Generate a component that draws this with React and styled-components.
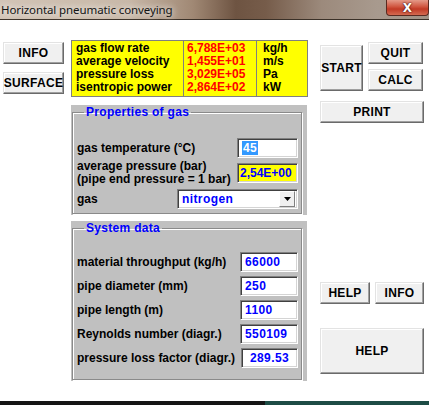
import React from 'react';
import styled, { createGlobalStyle } from 'styled-components';

const GlobalStyle = createGlobalStyle`
  html, body {
    margin: 0;
    padding: 0;
    background: #ffffff;
  }
  body {
    font-family: "Liberation Sans", Arial, sans-serif;
  }
  * {
    box-sizing: border-box;
  }
`;

const Window = styled.div`
  width: 429px;
  height: 405px;
  display: flex;
  flex-direction: column;
  overflow: hidden;
  background: #fff;
`;

const TitleBar = styled.div`
  height: 20px;
  flex: none;
  display: flex;
  justify-content: space-between;
  align-items: flex-start;
  border-bottom: 1px solid #3b3128;
  background: linear-gradient(
    90deg,
    #d2c4b6 0%,
    #c8b8a8 30%,
    #a08874 45%,
    #6e5442 55%,
    #765c4a 62%,
    #9c8a7c 75%,
    #a89a8e 88%,
    #a09285 100%
  );
`;

const Title = styled.span`
  font-family: "Noto Sans", "Open Sans", sans-serif;
  font-size: 11.5px;
  letter-spacing: -0.1px;
  line-height: 19px;
  color: #141414;
  padding-left: 1px;
  text-shadow: 0 0 6px rgba(255, 255, 255, 0.9), 0 0 10px rgba(255, 255, 255, 0.6);
`;

const CloseBtn = styled.div`
  width: 43px;
  height: 16px;
  border: 1px solid #5a2a20;
  border-top: none;
  border-radius: 0 0 4px 4px;
  background: linear-gradient(180deg, #e49a88 0%, #d0553f 45%, #c13a25 60%, #d46a50 100%);
  display: flex;
  align-items: center;
  justify-content: center;
  color: #fff;
  font-family: "DejaVu Sans", sans-serif;
  font-weight: bold;
  font-size: 12px;
  text-shadow: 0 0 2px #401010, 0 0 1px #401010;
`;

const Body = styled.div`
  flex: 1;
  display: flex;
  align-items: flex-start;
`;

const LeftCol = styled.div`
  display: flex;
  flex-direction: column;
  gap: 8px;
  padding: 22px 0 0 3px;
  width: 70px;
`;

const CenterCol = styled.div`
  display: flex;
  flex-direction: column;
  width: 237px;
  padding-top: 20px;
  margin-left: 1px;
`;

const RightCol = styled.div`
  display: flex;
  flex-direction: column;
  margin-left: 12px;
  padding-top: 22px;
  width: 104px;
`;

const Button = styled.div`
  width: ${p => p.$w || 61}px;
  height: ${p => p.$h || 22}px;
  margin-top: ${p => p.$mt || 0}px;
  background: #f0f0f0;
  border: 1px solid;
  border-color: #e3e3e3 #6a6a6a #6a6a6a #e3e3e3;
  box-shadow: inset -1px -1px 0 #a0a0a0, inset 1px 1px 0 #ffffff;
  display: flex;
  align-items: center;
  justify-content: center;
  font-weight: bold;
  font-size: 12px;
  color: #000;
  letter-spacing: 0.3px;
`;

const TopButtons = styled.div`
  display: grid;
  grid-template-columns: 43px 55px;
  grid-template-rows: 22px 22px;
  column-gap: 5px;
  row-gap: 5px;
  align-items: center;
`;

const StartSlot = styled.div`
  grid-row: 1 / span 2;
  display: flex;
  align-items: center;
  padding-top: 3px;
`;

const ButtonRow = styled.div`
  display: flex;
  gap: 5px;
  margin-top: ${p => p.$mt || 0}px;
`;

const ResultTable = styled.div`
  display: grid;
  grid-template-columns: 112px 73px 1fr;
  background: #ffff00;
  border: 1px solid #808080;
  height: 57px;
  padding-top: 1px;
`;

const Cell = styled.div`
  font-weight: bold;
  font-size: 12px;
  line-height: 13px;
  height: 13px;
  padding-left: ${p => p.$pl || 3}px;
  color: ${p => (p.$red ? '#ff0000' : '#000')};
  white-space: nowrap;
`;

const DividerCol = styled.div`
  display: flex;
  flex-direction: column;
  border-right: ${p => (p.$divider ? '1px solid #808080' : 'none')};
  margin-top: -1px;
  padding-top: 1px;
`;

const Panel = styled.div`
  background: #c0c0c0;
  margin-top: ${p => p.$mt}px;
  margin-right: 1px;
  height: ${p => p.$h}px;
  padding: 0 5px 1px 1px;
  display: flex;
`;

const Group = styled.fieldset`
  flex: 1;
  margin: 0;
  padding: ${p => p.$pt}px 3px 0 4px;
  border: 1px solid #8a8a8a;
  box-shadow: 1px 1px 0 #ffffff, inset 1px 1px 0 #ffffff;
  min-width: 0;
`;

const Legend = styled.legend`
  font-weight: bold;
  font-size: 12px;
  line-height: 14px;
  color: #0000ff;
  padding: 0 2px;
  margin-left: 7px;
  letter-spacing: 0.3px;
`;

const Row = styled.div`
  display: flex;
  justify-content: space-between;
  align-items: center;
  height: ${p => p.$h || 20}px;
  margin-top: ${p => p.$mt || 0}px;
`;

const Label = styled.div`
  font-weight: bold;
  font-size: 12px;
  line-height: 13px;
  color: #000;
  white-space: nowrap;
`;

const Field = styled.div`
  width: ${p => p.$w || 58}px;
  height: 20px;
  background: ${p => (p.$yellow ? '#ffff00' : '#ffffff')};
  border: 1px solid;
  border-color: #808080 #ffffff #ffffff #808080;
  box-shadow: inset 1px 1px 0 #404040, inset -1px -1px 0 #d4d4d4;
  display: flex;
  align-items: center;
  justify-content: ${p => (p.$center ? 'center' : 'flex-start')};
  padding-left: ${p => (p.$center ? 0 : p.$pl || 4)}px;
  font-weight: bold;
  font-size: 12px;
  color: #0000ff;
  white-space: nowrap;
  overflow: hidden;
  letter-spacing: ${p => (p.$tight ? 0 : 0.4)}px;
`;

const Selected = styled.span`
  background: #3399ff;
  color: #ffffff;
  line-height: 14px;
  padding: 0 1px;
`;

const Select = styled(Field)`
  width: 121px;
  justify-content: space-between;
  padding-right: 2px;
`;

const ArrowBtn = styled.div`
  width: 16px;
  height: 16px;
  background: #f0f0f0;
  border: 1px solid;
  border-color: #ffffff #808080 #808080 #ffffff;
  display: flex;
  align-items: center;
  justify-content: center;
`;

const BottomBar = styled.div`
  height: 4px;
  flex: none;
  display: flex;
`;

const BarPart = styled.div`
  width: ${p => p.$w}px;
  flex: ${p => (p.$w ? 'none' : 1)};
  background: ${p => p.$bg};
`;

const results = [
  ['gas flow rate', '6,788E+03', 'kg/h'],
  ['average velocity', '1,455E+01', 'm/s'],
  ['pressure loss', '3,029E+05', 'Pa'],
  ['isentropic power', '2,864E+02', 'kW'],
];

const systemRows = [
  ['material throughput (kg/h)', '66000'],
  ['pipe diameter (mm)', '250'],
  ['pipe length (m)', '1100'],
  ['Reynolds number (diagr.)', '550109'],
];

const App = () => (
  <Window>
    <GlobalStyle />
    <TitleBar>
      <Title>Horizontal pneumatic conveying</Title>
      <CloseBtn>X</CloseBtn>
    </TitleBar>
    <Body>
      <LeftCol>
        <Button>INFO</Button>
        <Button>SURFACE</Button>
      </LeftCol>

      <CenterCol>
        <ResultTable>
          <DividerCol $divider>
            {results.map(r => (
              <Cell key={r[0]} $pl={4}>{r[0]}</Cell>
            ))}
          </DividerCol>
          <DividerCol $divider>
            {results.map(r => (
              <Cell key={r[1]} $red $pl={3}>{r[1]}</Cell>
            ))}
          </DividerCol>
          <DividerCol>
            {results.map(r => (
              <Cell key={r[2]} $pl={6}>{r[2]}</Cell>
            ))}
          </DividerCol>
        </ResultTable>

        <Panel $mt={8} $h={110}>
          <Group $pt={19}>
            <Legend>Properties of gas</Legend>
            <Row>
              <Label>gas temperature (°C)</Label>
              <Field $w={61}><Selected>45</Selected></Field>
            </Row>
            <Row $h={26} $mt={2}>
              <Label>
                average pressure (bar)
                <br />
                (pipe end pressure = 1 bar)
              </Label>
              <Field $w={61} $yellow $tight $pl={2}>2,54E+00</Field>
            </Row>
            <Row $mt={3}>
              <Label>gas</Label>
              <Select>
                nitrogen
                <ArrowBtn>
                  <svg width="7" height="4" viewBox="0 0 7 4">
                    <path d="M0 0 L7 0 L3.5 4 Z" fill="#000" />
                  </svg>
                </ArrowBtn>
              </Select>
            </Row>
          </Group>
        </Panel>

        <Panel $mt={6} $h={160}>
          <Group $pt={17}>
            <Legend>System data</Legend>
            {systemRows.map((r, i) => (
              <Row key={r[0]} $mt={i === 0 ? 0 : 4}>
                <Label>{r[0]}</Label>
                <Field>{r[1]}</Field>
              </Row>
            ))}
            <Row $mt={4}>
              <Label>pressure loss factor (diagr.)</Label>
              <Field $w={57} $center>289.53</Field>
            </Row>
          </Group>
        </Panel>
      </CenterCol>

      <RightCol>
        <TopButtons>
          <StartSlot>
            <Button $w={43} $h={46}>START</Button>
          </StartSlot>
          <Button $w={55}>QUIT</Button>
          <Button $w={55}>CALC</Button>
        </TopButtons>
        <Button $w={104} $mt={10}>PRINT</Button>
        <ButtonRow $mt={159}>
          <Button $w={50}>HELP</Button>
          <Button $w={49}>INFO</Button>
        </ButtonRow>
        <Button $w={104} $h={46} $mt={24}>HELP</Button>
      </RightCol>
    </Body>
    <BottomBar>
      <BarPart $w={265} $bg="#151515" />
      <BarPart $bg="#1d4c45" />
    </BottomBar>
  </Window>
);

export default App;
